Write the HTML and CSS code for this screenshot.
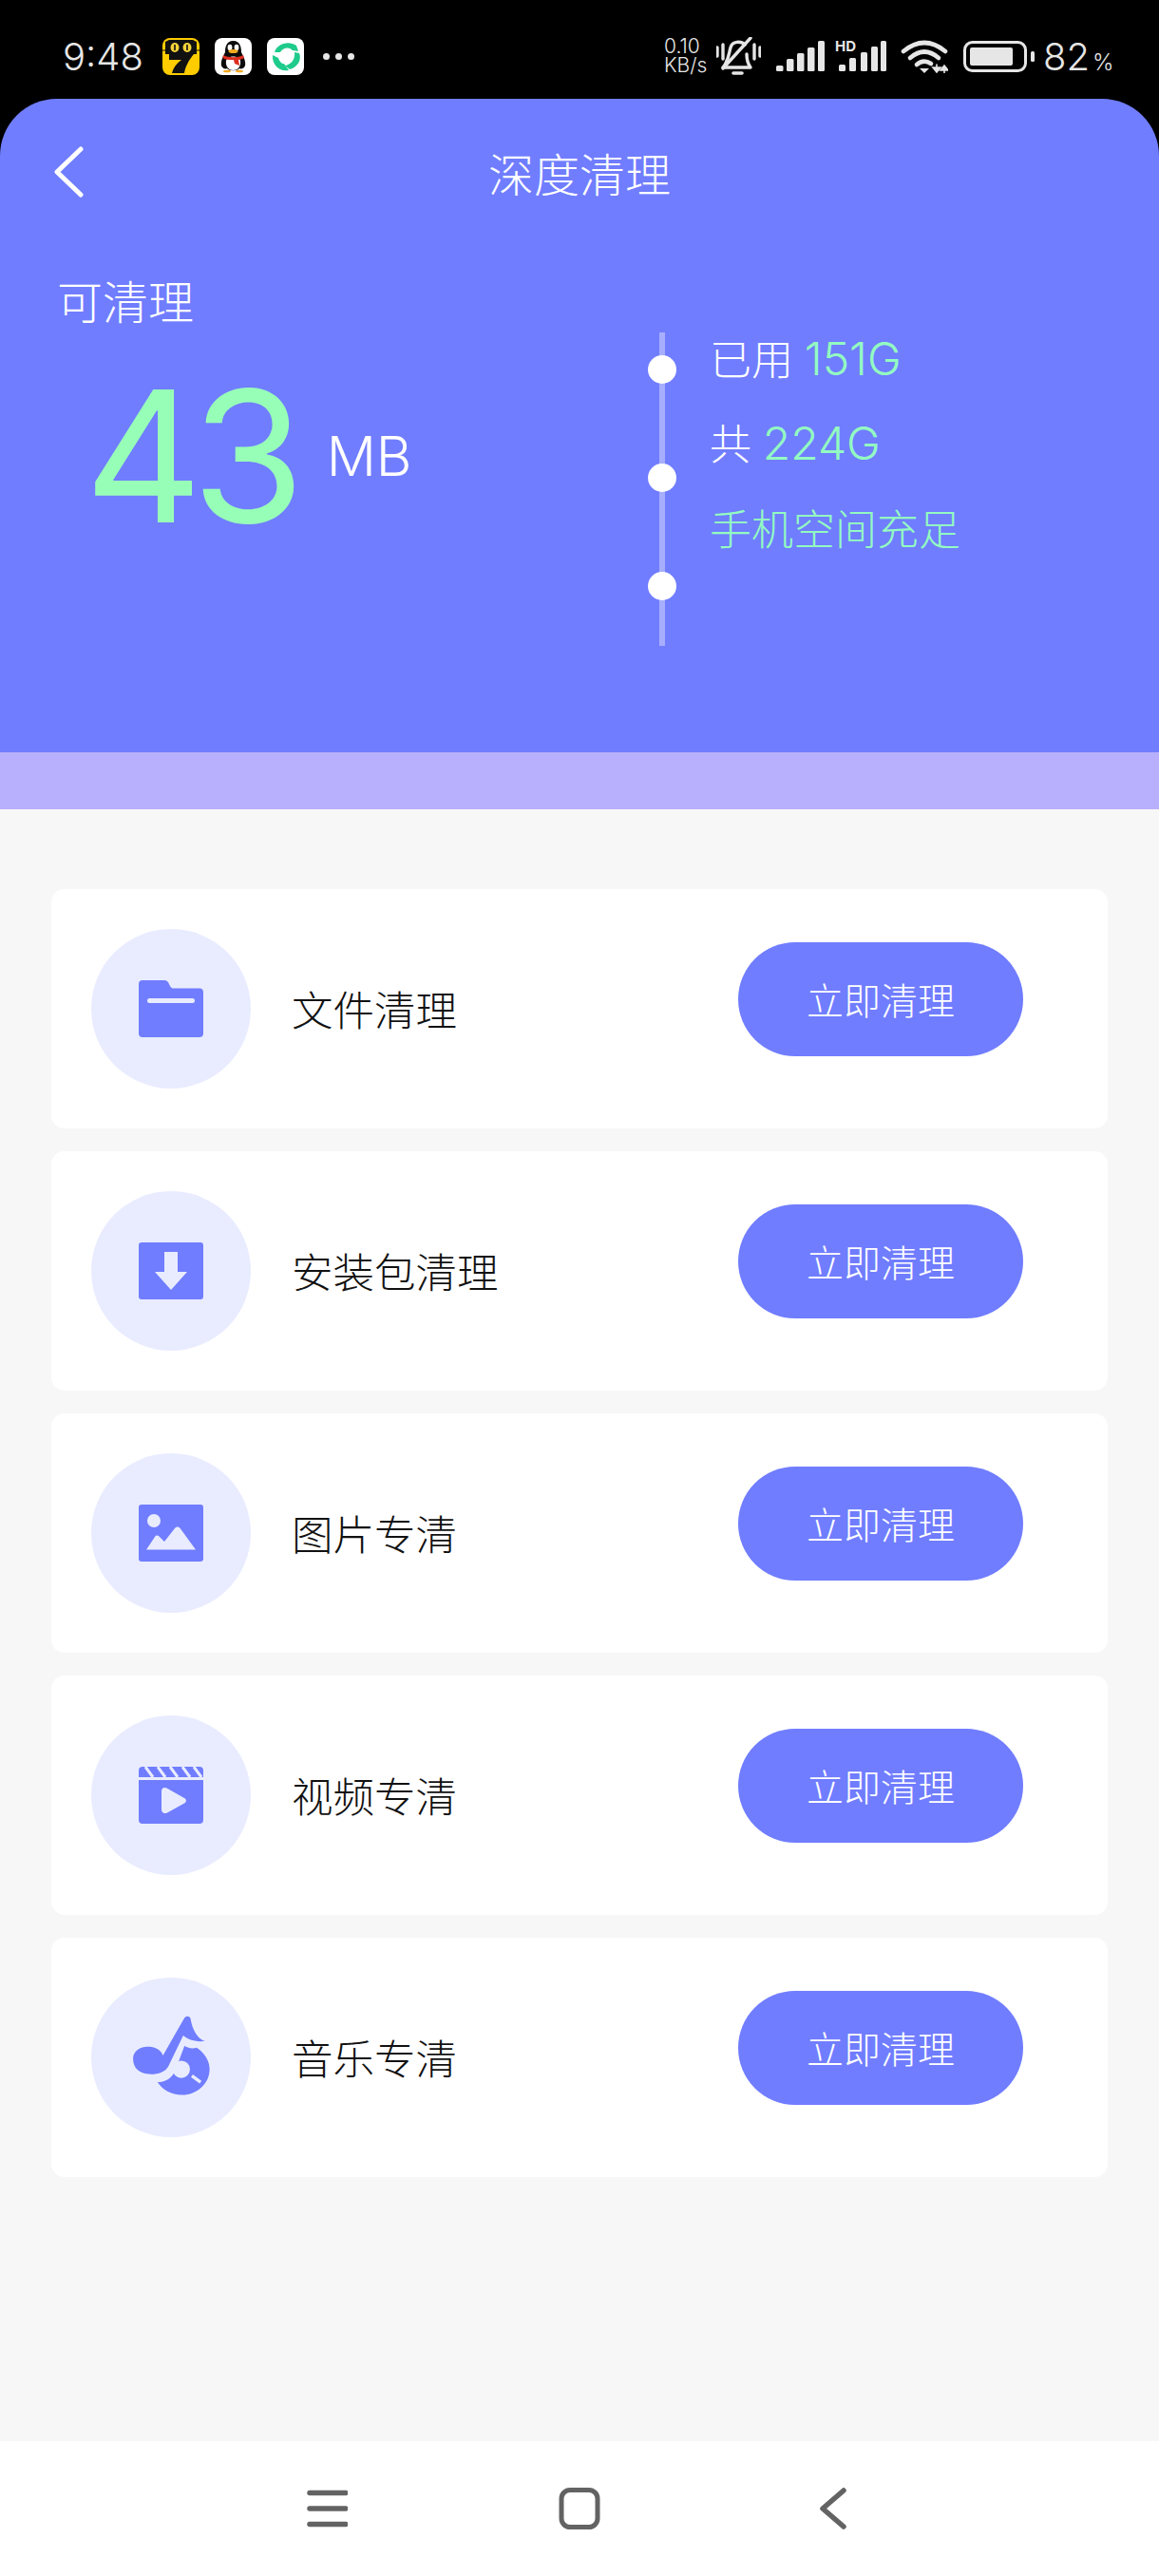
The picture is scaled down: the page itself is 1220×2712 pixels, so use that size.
FILE: index.html
```html
<!DOCTYPE html>
<html>
<head>
    <meta charset="utf-8">
    <link rel="stylesheet" href="styles.css">
</head>
<body>
<div class="phone">
    <div class="statusbar">
        <div class="status-left">
            <span class="time">9:48</span>
            <svg class="app-icon" viewBox="0 0 39 39">
                <rect width="39" height="39" rx="8" fill="#fc0"/>
                <path d="M3 4 L7 2 H32 L36 4 V17 H3Z" fill="#111"/>
                <path d="M0 13 H39" stroke="#111" stroke-width="1"/>
                <ellipse cx="13" cy="10" rx="4.500" ry="5" fill="#f5d33a"/>
                <ellipse cx="26" cy="10" rx="4.500" ry="5" fill="#f5d33a"/>
                <rect x="12.200" y="7" width="1.600" height="6" fill="#111"/>
                <rect x="25.200" y="7" width="1.600" height="6" fill="#111"/>
                <path d="M7 17 H33 C28 23 24 30 23 37 H10 C12 30 16 26 20 23 H7Z" fill="#111"/>
            </svg>
            <svg class="app-icon" viewBox="0 0 39 39">
                <rect width="39" height="39" rx="8" fill="#fff"/>
                <path d="M19.500 3 C12 3 11 10 11 15 C9 19 6 24 7 29 C8 32 11 33 13 32 C15 35 24 35 26 32 C28 33 31 32 32 29 C33 24 30 19 28 15 C28 10 27 3 19.500 3Z" fill="#0b0b0b"/>
                <path d="M12 24 C13 18 26 18 27 24 C28 31 23 34 19.500 34 C16 34 11 31 12 24Z" fill="#fff"/>
                <ellipse cx="16" cy="10" rx="2.400" ry="3.200" fill="#fff"/>
                <ellipse cx="23" cy="10" rx="2.400" ry="3.200" fill="#fff"/>
                <ellipse cx="19.500" cy="14" rx="5" ry="2" fill="#f2a81d"/>
                <path d="M9 18 C14 21 25 21 30 18 L31 21 C28 23 26 23 25 23 L26 29 L21 27 L20 23 C15 23 11 23 8.500 21Z" fill="#dc2d1e"/>
                <ellipse cx="13" cy="35" rx="4" ry="1.300" fill="#f2a81d"/>
                <ellipse cx="26" cy="35" rx="4" ry="1.300" fill="#f2a81d"/>
            </svg>
            <svg class="app-icon" viewBox="0 0 39 39">
                <rect width="39" height="39" rx="8" fill="#fff"/>
                <path d="M8 15 C10 7 22 2 31 8 L33 14 L27 13 C23 9 17 10 14 15Z" fill="#1ecb8b"/>
                <path d="M29 15 L34 16 C37 23 32 31 24 33 L19 29 C25 28 30 23 29 15Z" fill="#1ecb8b"/>
                <path d="M6 18 L12 21 C13 25 17 28 18 27 L23 34 C13 36 5 28 6 18Z" fill="#1ecb8b"/>
            </svg>
            <span class="more-dots"><i></i><i></i><i></i></span>
        </div>
        <div class="status-right">
            <div class="net-speed"><span>0.10</span><span>KB/s</span></div>
            <svg class="ic-bell" viewBox="0 0 47 40" fill="none" stroke="#e6e6e6" stroke-width="3.400" stroke-linecap="round" stroke-linejoin="round">
                <path d="M1 11 V20 M7 8 V23 M40 8 V23 M46 11 V20"/>
                <path d="M30 8 C26 4 17 4 15 11 C13 18 13 25 7 32 H36 C33 28 32 24 32 18"/>
                <path d="M36 1 L7 33"/>
                <path d="M18 38 H27" stroke-width="3.600"/>
            </svg>
            <svg class="ic-signal" viewBox="0 0 51 32">
                <rect x="0" y="26" width="7.500" height="6" rx="1.500"/>
                <rect x="11" y="19" width="7.500" height="13" rx="1.500"/>
                <rect x="22" y="13" width="7.500" height="19" rx="1.500"/>
                <rect x="33" y="7" width="7.500" height="25" rx="1.500"/>
                <rect x="44" y="0" width="7" height="32" rx="1.500"/>
            </svg>
            <svg class="ic-signal-hd" viewBox="0 0 54 32">
                <text x="0" y="11" class="hd-text">HD</text>
                <rect x="4" y="25" width="7" height="7" rx="1.500"/>
                <rect x="15" y="18" width="7" height="14" rx="1.500"/>
                <rect x="27" y="12" width="7" height="20" rx="1.500"/>
                <rect x="38" y="6" width="7" height="26" rx="1.500"/>
                <rect x="48" y="0" width="6" height="32" rx="1.500"/>
            </svg>
            <svg class="ic-wifi" viewBox="0 0 50 36" fill="none" stroke="#e6e6e6" stroke-width="4.600" stroke-linecap="round">
                <path d="M3 13 Q25 -5 47 13"/>
                <path d="M10 20 Q25 7 40 20"/>
                <path d="M17 27 Q24 21 32 26"/>
                <path d="M20 31 H30 L25 36Z" fill="#e6e6e6" stroke="none"/>
                <path d="M34 30 H42 L38 35Z M38 27 V31 M46 28 L50 33 H42Z M46 32 V36" fill="#e6e6e6" stroke="#e6e6e6" stroke-width="1.600"/>
            </svg>
            <svg class="ic-battery" viewBox="0 0 75 33">
                <rect x="1.500" y="1.500" width="64" height="30" rx="8" fill="none" stroke="#e6e6e6" stroke-width="3"/>
                <rect x="7" y="7" width="45" height="19" rx="2" fill="#e6e6e6"/>
                <rect x="71" y="11" width="4" height="11" rx="1.500" fill="#e6e6e6"/>
            </svg>
            <div class="battery-pct">82<span>%</span></div>
        </div>
    </div>

    <div class="hero">
        <div class="hero-nav">
            <svg class="back-btn" viewBox="0 0 32 54" fill="none" stroke="#fff" stroke-width="5" stroke-linecap="round" stroke-linejoin="round">
                <path d="M29 3 L4 27 L29 51"/>
            </svg>
            <h1 class="hero-title">深度清理</h1>
        </div>
        <div class="hero-body">
            <div class="hero-left">
                <div class="hero-label">可清理</div>
                <div class="hero-size">
                    <span class="size-num">43</span>
                    <span class="size-unit">MB</span>
                </div>
            </div>
            <div class="timeline">
                <i class="dot"></i>
                <i class="dot"></i>
                <i class="dot"></i>
            </div>
            <div class="info">
                <div class="info-line">已用 <span class="mint num">151G</span></div>
                <div class="info-line">共 <span class="mint num">224G</span></div>
                <div class="info-line mint">手机空间充足</div>
            </div>
        </div>
    </div>
    <div class="band"></div>

    <div class="content">
        <div class="card">
            <div class="card-icon">
                <svg class="glyph" viewBox="0 0 68 60">
                    <path d="M4 0 H27 C29 0 30.500 1 31.500 3 L33 6 C34 8 35 8.500 37 8.500 H64 C66.500 8.500 68 10 68 12.500 V56 C68 58.500 66.500 60 64 60 H4 C1.500 60 0 58.500 0 56 V4 C0 1.500 1.500 0 4 0Z" fill="#707dff"/>
                    <rect x="9" y="19" width="50" height="5" rx="2.500" fill="#e9ecff"/>
                </svg>
            </div>
            <div class="card-name">文件清理</div>
            <button class="clean-btn">立即清理</button>
        </div>
        <div class="card">
            <div class="card-icon">
                <svg class="glyph" viewBox="0 0 68 60">
                    <rect width="68" height="60" rx="3" fill="#707dff"/>
                    <path d="M27 10 H41 V31 H51 L34 50 L17 31 H27Z" fill="#e9ecff"/>
                </svg>
            </div>
            <div class="card-name">安装包清理</div>
            <button class="clean-btn">立即清理</button>
        </div>
        <div class="card">
            <div class="card-icon">
                <svg class="glyph" viewBox="0 0 68 60">
                    <rect width="68" height="60" rx="3" fill="#707dff"/>
                    <circle cx="16" cy="17" r="7" fill="#e9ecff"/>
                    <path d="M8 47.500 L17 34 C18 32 20 32 21.500 33.500 L27 39 L38 25 C40 23 42 23 44 25.500 L60 47.500Z" fill="#e9ecff"/>
                </svg>
            </div>
            <div class="card-name">图片专清</div>
            <button class="clean-btn">立即清理</button>
        </div>
        <div class="card">
            <div class="card-icon">
                <svg class="glyph" viewBox="0 0 68 60">
                    <path d="M4 0 H64 C66.500 0 68 1.500 68 4 V11 H0 V4 C0 1.500 1.500 0 4 0Z" fill="#707dff"/>
                    <path d="M7 0 L15 11 M20 0 L28 11 M33 0 L41 11 M46 0 L54 11 M58 0 L66 11" stroke="#e9ecff" stroke-width="3"/>
                    <path d="M0 14 H68 V56 C68 58.500 66.500 60 64 60 H4 C1.500 60 0 58.500 0 56Z" fill="#707dff"/>
                    <path d="M24 26 C24 22.500 26.500 21 29.500 22.500 L48 33 C50.500 34.500 50.500 37 48 38.500 L30 48.500 C27 50 24 48.500 24 45Z" fill="#e9ecff"/>
                </svg>
            </div>
            <div class="card-name">视频专清</div>
            <button class="clean-btn">立即清理</button>
        </div>
        <div class="card">
            <div class="card-icon">
                <svg class="glyph-music" viewBox="140 128 260 260">
                    <path d="M152 262 C152 235 180 222 205 225 C225 227 240 238 245 252 L312 135 C318 128 328 128 331 138 C335 165 350 200 375 207 C345 212 320 200 308 190 L262 285 C252 305 225 312 200 310 C170 308 152 290 152 262Z" fill="#707dff"/>
                    <path d="M312 222 C318 228 335 232 350 228 C375 245 390 270 390 295 C390 340 350 375 305 375 C270 375 243 358 228 335 C255 335 272 322 283 300Z" fill="#707dff"/>
                    <circle cx="302" cy="295" r="27" fill="#e9ecff"/>
                    <path d="M335 315 L362 335" stroke="#e9ecff" stroke-width="10"/>
                </svg>
            </div>
            <div class="card-name">音乐专清</div>
            <button class="clean-btn">立即清理</button>
        </div>
    </div>

    <div class="navbar">
        <svg class="nav-icon" viewBox="0 0 44 44" fill="none" stroke="#636363" stroke-width="5.500" stroke-linecap="round" stroke-linejoin="round">
            <path d="M4 5.500 H42 M4 22 H42 M4 38.500 H42"/>
        </svg>
        <svg class="nav-icon" viewBox="0 0 44 44" fill="none" stroke="#636363" stroke-width="5" stroke-linejoin="round">
            <rect x="3" y="2.500" width="38" height="39" rx="9"/>
        </svg>
        <svg class="nav-icon" viewBox="0 0 44 44" fill="none" stroke="#636363" stroke-width="5.500" stroke-linecap="round" stroke-linejoin="round">
            <path d="M34 3 L12 22 L34 41"/>
        </svg>
    </div>
</div>
</body>
</html>
```
FILE: styles.css
```css
:root {
    --primary-color: #707dff;
    --mint-color: #93fbc1;
    --status-color: #e6e6e6;
    --cjk: "Noto Sans CJK SC", sans-serif;
    --latin: Inter, "Noto Sans CJK SC", sans-serif;
}
* {
    box-sizing: border-box;
}
body {
    margin: 0;
    background: #000;
    font-family: var(--latin);
}
.phone {
    display: flex;
    flex-direction: column;
    width: 1220px;
    height: 2712px;
    overflow: hidden;
}

/* status bar */
.statusbar {
    display: flex;
    justify-content: space-between;
    align-items: center;
    flex: 0 0 104px;
    padding: 14px 58px 0 66px;
    color: var(--status-color);
}
.status-left,
.status-right {
    display: flex;
    align-items: center;
}
.status-left {
    gap: 16px;
}
.time {
    width: 89px;
    font-size: 40px;
    font-weight: 300;
}
.app-icon {
    width: 39px;
    height: 39px;
}
.more-dots {
    display: flex;
    gap: 6px;
    margin-left: 4px;
}
.more-dots i {
    width: 7px;
    height: 7px;
    border-radius: 50%;
    background: var(--status-color);
}
.net-speed {
    display: flex;
    flex-direction: column;
    width: 44px;
    font-size: 21px;
    font-weight: 300;
    line-height: 20px;
}
.ic-bell {
    width: 47px;
    height: 40px;
    margin-left: 11px;
}
.ic-signal {
    width: 51px;
    height: 32px;
    margin-left: 16px;
    fill: var(--status-color);
}
.ic-signal-hd {
    width: 54px;
    height: 32px;
    margin-left: 11px;
    fill: var(--status-color);
}
.hd-text {
    font-size: 15px;
    font-weight: 700;
}
.ic-wifi {
    width: 50px;
    height: 36px;
    margin-left: 15px;
}
.ic-battery {
    width: 75px;
    height: 33px;
    margin-left: 16px;
}
.battery-pct {
    width: 64px;
    margin-left: 9px;
    font-size: 40px;
    font-weight: 300;
}
.battery-pct span {
    margin-left: 3px;
    font-size: 24px;
}

/* blue header */
.hero {
    flex: 0 0 688px;
    background: var(--primary-color);
    border-radius: 60px 60px 0 0;
    color: #fff;
}
.hero-nav {
    display: flex;
    align-items: center;
    justify-content: center;
    position: relative;
    height: 156px;
}
.back-btn {
    position: absolute;
    left: 56px;
    top: 50px;
    width: 32px;
    height: 54px;
}
.hero-title {
    margin: 0 0 3px;
    font-family: var(--cjk);
    font-size: 48px;
    font-weight: 300;
}
.hero-body {
    display: flex;
    padding-top: 31px;
}
.hero-left {
    flex: 0 0 682px;
    padding-left: 60px;
}
.hero-label {
    font-family: var(--cjk);
    font-size: 48px;
    font-weight: 300;
    line-height: 48px;
}
.hero-size {
    display: flex;
    align-items: center;
    margin-top: 26px;
    padding-left: 29px;
}
.size-num {
    color: #97feb8;
    font-size: 192px;
    font-weight: 400;
    line-height: 230px;
    letter-spacing: -11px;
}
.size-unit {
    margin-left: 34px;
    font-size: 58px;
    font-weight: 300;
}
.timeline {
    display: flex;
    flex-direction: column;
    align-items: center;
    gap: 84px;
    position: relative;
    width: 30px;
    height: 330px;
    margin-top: 59px;
    padding-top: 24px;
}
.timeline::before {
    content: "";
    position: absolute;
    top: 0;
    bottom: 0;
    left: 12px;
    width: 6px;
    background: #a7aefd;
}
.dot {
    position: relative;
    flex: 0 0 30px;
    width: 30px;
    border-radius: 50%;
    background: #fff;
}
.info {
    margin: 40px 0 0 35px;
}
.info-line {
    font-family: var(--cjk);
    font-size: 44px;
    font-weight: 300;
    line-height: 90px;
}
.info-line:nth-child(2) {
    margin-top: -3px;
}
.info-line:nth-child(3) {
    margin-top: -2px;
}
.mint {
    color: var(--mint-color);
}
.num {
    margin-left: 2px;
    font-family: var(--latin);
    font-size: 48px;
}
.band {
    flex: 0 0 60px;
    background: #b9b0fd;
}

/* list */
.content {
    display: flex;
    flex-direction: column;
    flex: 1;
    gap: 24px;
    padding: 84px 54px 0;
    background: #f7f7f7;
}
.card {
    display: flex;
    align-items: center;
    height: 252px;
    padding-left: 42px;
    background: #fff;
    border-radius: 14px;
}
.card-icon {
    display: flex;
    align-items: center;
    justify-content: center;
    flex: 0 0 168px;
    height: 168px;
    border-radius: 50%;
    background: #e9ecff;
}
.glyph {
    width: 68px;
    height: 60px;
}
.glyph-music {
    width: 88px;
    height: 88px;
}
.card-name {
    margin-left: 43px;
    padding-bottom: 2px;
    color: #111;
    font-family: var(--cjk);
    font-size: 43.500px;
    font-weight: 300;
}
.clean-btn {
    align-self: flex-start;
    width: 300px;
    height: 120px;
    margin: 56px 89px 0 auto;
    padding: 0 0 3px;
    border: none;
    border-radius: 60px;
    background: var(--primary-color);
    color: #fff;
    font-family: var(--cjk);
    font-size: 39px;
    font-weight: 300;
}

/* bottom nav */
.navbar {
    display: flex;
    align-items: center;
    justify-content: center;
    gap: 222px;
    flex: 0 0 142px;
    background: #fff;
}
.nav-icon {
    width: 44px;
    height: 44px;
}
```
